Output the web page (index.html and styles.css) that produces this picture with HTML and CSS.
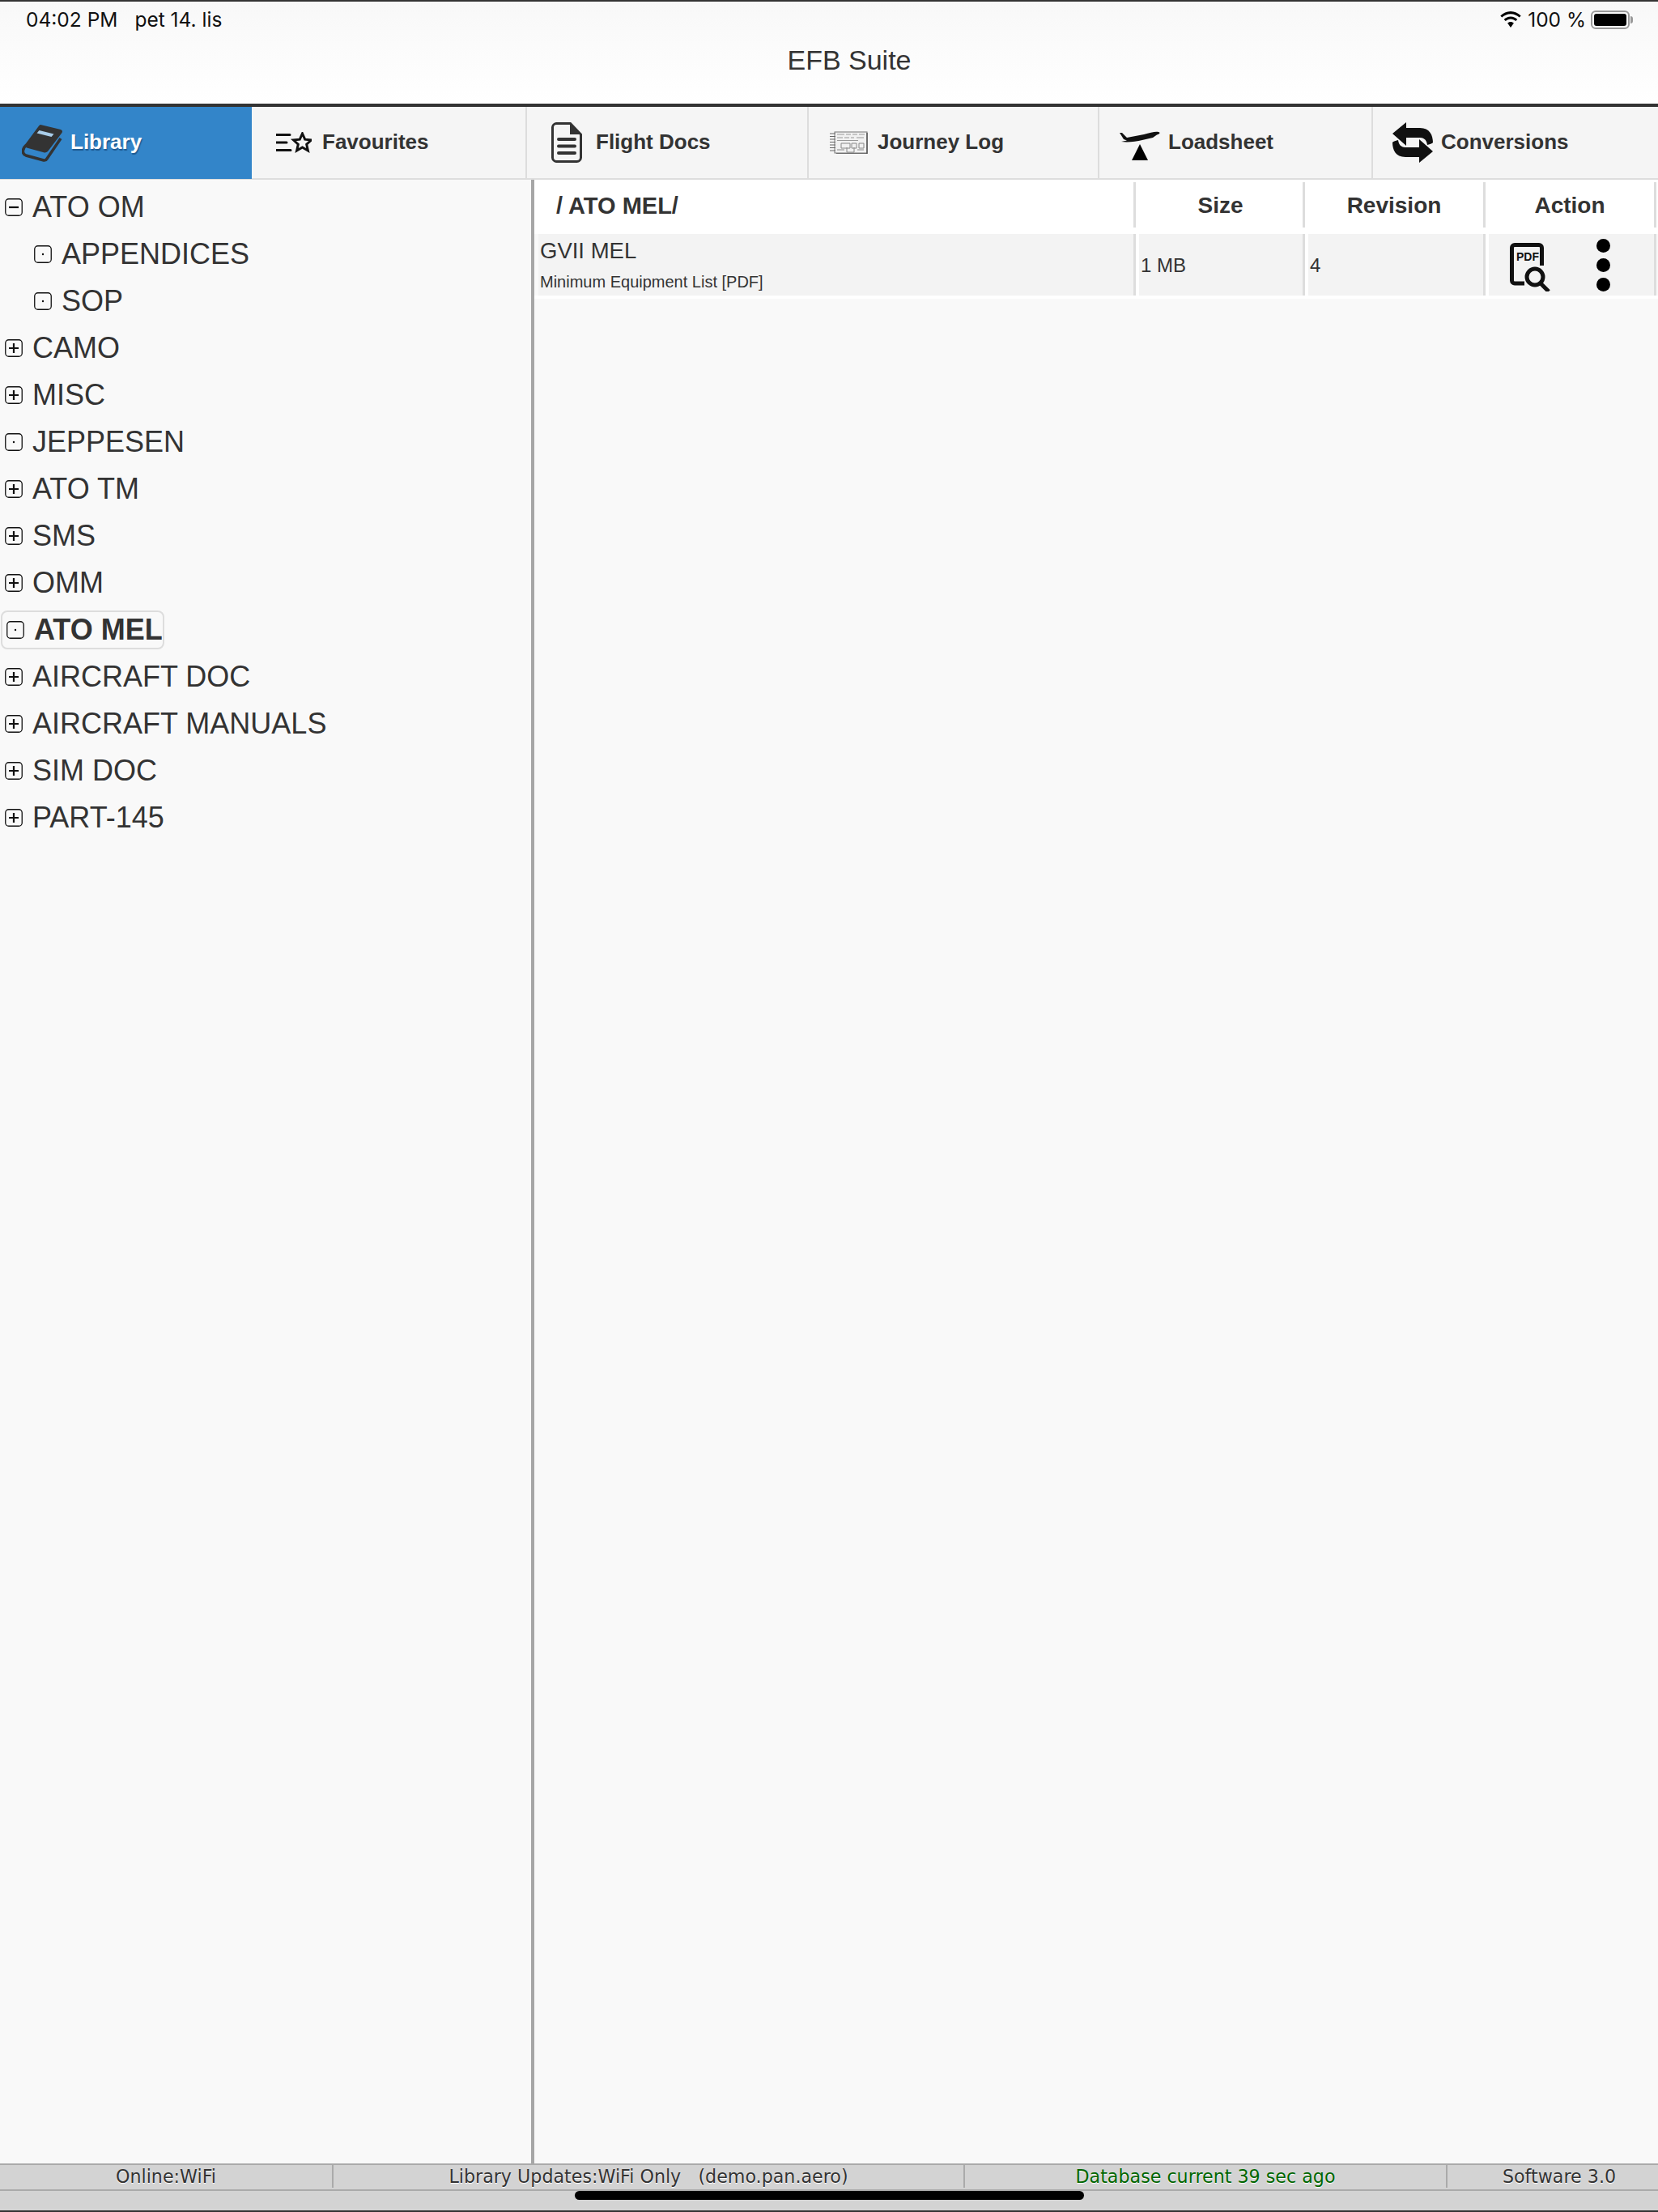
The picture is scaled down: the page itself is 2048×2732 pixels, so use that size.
FILE: index.html
```html
<!DOCTYPE html>
<html lang="en">

<head>
    <meta charset="UTF-8">
    <meta name="viewport" content="width=device-width, initial-scale=1.0">
    <title>EFB Suite</title>
    <link rel="stylesheet" href="styles.css">
</head>
<body>
<div class="app">

    <!-- status bar and title -->
    <header class="header">
        <div class="status">
            <div class="status-left">
                <span>04:02 PM</span>
                <span>pet 14. lis</span>
            </div>
            <div class="status-right">
                <svg class="wifi" viewBox="0 0 28 20"><path d="M14 3.200c4.200 0 7.900 1.700 10.700 4.400l2-2.100C23.300 2.100 18.900 0 14 0S4.700 2.100 1.300 5.500l2 2.100C6.100 4.900 9.800 3.200 14 3.200z"/><path d="M14 9.600c2.400 0 4.500.9 6.200 2.500l2.100-2.200C20.100 7.800 17.200 6.500 14 6.500s-6.100 1.300-8.300 3.400l2.100 2.200c1.700-1.600 3.800-2.500 6.200-2.500z"/><path d="M14 13c-1.500 0-2.800.6-3.900 1.600L14 20l3.900-5.400C16.800 13.600 15.500 13 14 13z"/></svg>
                <span>100 %</span>
                <div class="battery"><div class="battery-fill"></div></div>
                <div class="battery-nub"></div>
            </div>
        </div>
        <h1 class="title">EFB Suite</h1>
    </header>

    <!-- main tabs -->
    <nav class="tabs">
        <div class="tab tab-active tab-library">
            <svg class="icon-book" viewBox="0 0 50 46"><path fill="#333" d="M23 0L48 6Q51 7 49.500 10L32 33Q30 35 27 34.300L6 28.500Q3 27.500 4 24.500L21 1.500Q22 0 23 0z"/><path fill="none" stroke="#333" stroke-width="3.500" d="M5.500 25C0 30 0 36 5 38L27 44Q29.500 44.500 31 42L48 17"/><path d="M21.500 7L39.500 11.500L36.500 15L18.500 10.500z" fill="#a9cde9"/></svg>
            <span>Library</span>
        </div>
        <div class="tab tab-favourites">
            <svg class="icon-fav" viewBox="0 0 44 26"><path d="M0 3.500h17M0 13h13M0 22.500h18" stroke="#111" stroke-width="3" stroke-linecap="round"/><path d="M32.500 2l3.200 7.200 7.800.8-5.800 5.200 1.700 7.800-6.900-4-6.900 4 1.700-7.800-5.800-5.200 7.800-.8z" fill="none" stroke="#111" stroke-width="3"/></svg>
            <span>Favourites</span>
        </div>
        <div class="tab tab-docs">
            <svg class="icon-doc" viewBox="0 0 38 50"><path d="M6 1.500h17.500L36.500 15v28.500a5 5 0 0 1-5 5H6a5 5 0 0 1-4.500-5V6.500A5 5 0 0 1 6 1.500z" fill="none" stroke="#333" stroke-width="3"/><path d="M23 1.500L36.500 15H23z" fill="#333"/><path d="M9 21h20M9 29.500h20M9 38h20" stroke="#333" stroke-width="4" stroke-linecap="round"/></svg>
            <span>Flight Docs</span>
        </div>
        <div class="tab tab-journey">
            <svg class="icon-log" viewBox="0 0 47 28"><rect x="6" y="1" width="40" height="26" fill="#f1f1f1" stroke="#777" stroke-width="1"/><path d="M46 2v26H8" fill="none" stroke="#555" stroke-width="1.500"/><path d="M0 3h7M0 6.500h7M0 10h7M0 13.500h7M0 17h7M0 20.500h7M0 24h7" stroke="#666" stroke-width="1.200"/><path d="M9 4h9M20 4h6M28 4h6M36 4h7M9 8h7M18 8h6M26 8h4M33 8h9M9 11.500h26" stroke="#999" stroke-width="1.200"/><path d="M14 15h11v6H14zM27 15h6v6h-6zM36 15h6v6h-6zM9 23h9M21 20v6h9v-6M34 23h8" fill="none" stroke="#888" stroke-width="1"/></svg>
            <span>Journey Log</span>
        </div>
        <div class="tab tab-load">
            <svg class="icon-load" viewBox="0 0 50 36"><path d="M0 2L3 2L9 8L30 4C38 2 44 0 48 1C51 2 49 3.500 46 4.500L41 8L28 11C20 13 10 14 2 13L9 11.500L5 10z" fill="#111"/><path d="M25 16L15 36H35z" fill="#000"/></svg>
            <span>Loadsheet</span>
        </div>
        <div class="tab tab-conv">
            <svg class="icon-conv" viewBox="0 0 50 50"><path d="M17 0L0 14l17 15V19h15c6 0 10 1.500 11 9 4-1 6.500-2 7-3 0-9-4-18-16-18H17z" fill="#111"/><path d="M33 50l17-14-17-15v10H18c-6 0-10-1.500-11-9-4 1-6.500 2-7 3 0 9 4 18 16 18h17z" fill="#111"/></svg>
            <span>Conversions</span>
        </div>
    </nav>

    <div class="main">
        <!-- folder tree -->
        <aside class="tree">
            <div class="node"><svg class="box"><use href="#box-minus"/></svg>ATO OM</div>
            <div class="node node-child"><svg class="box"><use href="#box-dot"/></svg>APPENDICES</div>
            <div class="node node-child"><svg class="box"><use href="#box-dot"/></svg>SOP</div>
            <div class="node"><svg class="box"><use href="#box-plus"/></svg>CAMO</div>
            <div class="node"><svg class="box"><use href="#box-plus"/></svg>MISC</div>
            <div class="node"><svg class="box"><use href="#box-dot"/></svg>JEPPESEN</div>
            <div class="node"><svg class="box"><use href="#box-plus"/></svg>ATO TM</div>
            <div class="node"><svg class="box"><use href="#box-plus"/></svg>SMS</div>
            <div class="node"><svg class="box"><use href="#box-plus"/></svg>OMM</div>
            <div class="node node-selected"><span class="selected-box"><svg class="box"><use href="#box-dot"/></svg>ATO MEL</span></div>
            <div class="node"><svg class="box"><use href="#box-plus"/></svg>AIRCRAFT DOC</div>
            <div class="node"><svg class="box"><use href="#box-plus"/></svg>AIRCRAFT MANUALS</div>
            <div class="node"><svg class="box"><use href="#box-plus"/></svg>SIM DOC</div>
            <div class="node"><svg class="box"><use href="#box-plus"/></svg>PART-145</div>
        </aside>

        <!-- file list -->
        <section class="files">
            <div class="file-head">
                <div class="col col-name head-path">/ ATO MEL/</div>
                <div class="col col-size head-cell">Size</div>
                <div class="col col-rev head-cell">Revision</div>
                <div class="col col-action head-cell">Action</div>
            </div>
            <div class="file-row">
                <div class="col col-name">
                    <div class="file-name">GVII MEL</div>
                    <div class="file-desc">Minimum Equipment List [PDF]</div>
                </div>
                <div class="col col-size row-cell">1 MB</div>
                <div class="col col-rev row-cell">4</div>
                <div class="col col-action row-action">
                    <svg class="icon-pdf" viewBox="0 0 50 60">
                        <path d="M18 50H6a3.500 3.500 0 0 1-3.500-3.500V6A3.500 3.500 0 0 1 6 2.500h30A3.500 3.500 0 0 1 39.500 6v22" fill="none" stroke="#111" stroke-width="5"/>
                        <circle cx="31" cy="42" r="10" fill="none" stroke="#111" stroke-width="5"/>
                        <path d="M38 50l10 10" stroke="#111" stroke-width="5"/>
                        <text x="8" y="22" class="pdf-label">PDF</text>
                    </svg>
                    <div class="dots"><span></span><span></span><span></span></div>
                </div>
            </div>
        </section>
    </div>

    <!-- status strip -->
    <footer class="footer">
        <div class="foot-bar">
            <div class="foot-cell foot-online">Online:WiFi</div>
            <div class="foot-cell foot-lib">Library Updates:WiFi Only &nbsp; (demo.pan.aero)</div>
            <div class="foot-cell foot-db">Database current 39 sec ago</div>
            <div class="foot-cell foot-soft">Software 3.0</div>
        </div>
        <div class="home-area"><div class="home-bar"></div></div>
    </footer>
</div>

<svg class="defs" width="0" height="0">
    <symbol id="box-plus" viewBox="0 0 22 22"><rect x=".75" y=".75" width="20.500" height="20.500" rx="4" fill="none" stroke="#111" stroke-width="1.300"/><path d="M5 11h12M11 5v12" stroke="#111" stroke-width="2.200"/></symbol>
    <symbol id="box-minus" viewBox="0 0 22 22"><rect x=".75" y=".75" width="20.500" height="20.500" rx="4" fill="none" stroke="#111" stroke-width="1.300"/><path d="M5 11h12" stroke="#111" stroke-width="2.200"/></symbol>
    <symbol id="box-dot" viewBox="0 0 22 22"><rect x=".75" y=".75" width="20.500" height="20.500" rx="4" fill="none" stroke="#111" stroke-width="1.300"/><circle cx="11" cy="11" r="1.200" fill="#111"/></symbol>
</svg>
</body>
</html>
```

FILE: styles.css
```css
* {
    box-sizing: border-box;
}

html, body {
    margin: 0;
    padding: 0;
    height: 100%;
}

body {
    font-family: 'Liberation Sans', Arial, sans-serif;
    color: #333;
    background-color: #f9f9f9;
}

.app {
    display: flex;
    flex-direction: column;
    width: 2048px;
    height: 2732px;
    overflow: hidden;
}

.defs {
    position: absolute;
}

/* header */
.header {
    height: 132px;
    flex: none;
    border-top: 2px solid #333;
    border-bottom: 4px solid #333;
    background: linear-gradient(#f8f8f8, #fff);
}

.status {
    display: flex;
    justify-content: space-between;
    height: 34px;
    padding: 7px 31px 0 32px;
    font-family: Inter, 'Liberation Sans', sans-serif;
    font-size: 24.5px;
    color: #111;
}

.status-left {
    display: flex;
    gap: 21px;
    line-height: 30px;
}

.status-right {
    display: flex;
    align-items: center;
    height: 30px;
}

.wifi {
    width: 28px;
    height: 20px;
    margin-right: 7px;
}

.battery {
    width: 48px;
    height: 23px;
    margin-left: 6px;
    padding: 2px;
    border: 2px solid #999;
    border-radius: 6px;
}

.battery-fill {
    height: 100%;
    background: #000;
    border-radius: 3px;
}

.battery-nub {
    width: 3px;
    height: 9px;
    margin-left: 1px;
    background: #999;
    border-radius: 0 3px 3px 0;
}

.title {
    margin: 16px 0 0;
    padding-left: 50px;
    text-align: center;
    font-size: 34px;
    font-weight: normal;
    line-height: 44px;
    color: #333;
}

/* tabs */
.tabs {
    display: flex;
    height: 90px;
    flex: none;
    background: #f5f5f5;
    border-bottom: 2px solid #ddd;
    font-size: 26px;
    font-weight: bold;
    color: #333;
}

.tab {
    display: flex;
    align-items: center;
    height: 88px;
    border-right: 2px solid #ddd;
    white-space: nowrap;
}

.tab span {
    margin-bottom: 2px;
}

.tab-active {
    height: 89px;
    background: #3385c9;
    border-right: none;
    color: #fff;
    text-shadow: 1px 2px 1px #1d5a91;
}

.tab-library { width: 311px; padding-left: 27px; gap: 10px; }
.tab-favourites { width: 340px; padding-left: 30px; gap: 13px; }
.tab-docs { width: 348px; padding-left: 30px; gap: 17px; }
.tab-journey { width: 359px; padding-left: 26px; gap: 12px; }
.tab-load { width: 338px; padding-left: 25px; gap: 10px; }
.tab-conv { width: 352px; padding-left: 24px; gap: 10px; border-right: none; }

.icon-book { width: 50px; height: 46px; }
.icon-fav { width: 44px; height: 26px; }
.icon-doc { width: 38px; height: 50px; }
.icon-log { width: 47px; height: 28px; }
.icon-load { width: 50px; height: 36px; margin-top: 8px; }
.icon-conv { width: 50px; height: 50px; }

/* main area */
.main {
    display: flex;
    flex: 1;
    min-height: 0;
}

.tree {
    width: 656px;
    flex: none;
    padding-top: 5px;
    background: #f9f9f9;
}

.node {
    display: flex;
    align-items: center;
    height: 58px;
    padding-left: 6px;
    font-size: 36px;
    color: #333;
    white-space: nowrap;
}

.node-child {
    padding-left: 42px;
}

.box {
    width: 22px;
    height: 22px;
    margin: 0 12px 0 0;
    flex: none;
}

.node-selected {
    padding-left: 1px;
    font-weight: bold;
}

.selected-box {
    display: flex;
    align-items: center;
    height: 48px;
    padding: 0 0 0 5px;
    border: 2px solid #ddd;
    border-radius: 8px;
}

.files {
    flex: 1;
    background: #f9f9f9;
    border-left: 4px solid #a6a6a6;
}

.file-head {
    display: flex;
    height: 67px;
    background: #fff;
    padding-left: 5px;
    font-size: 28px;
    font-weight: bold;
    color: #333;
}

.file-row {
    display: flex;
    height: 76px;
    padding-left: 5px;
    box-shadow: 0 4px 0 #fff;
}

.col {
    flex: none;
}

.col-name { width: 738px; }
.col-size { width: 209px; }
.col-rev { width: 223px; }
.col-action { width: 211px; }

.file-head .col {
    display: flex;
    align-items: center;
    margin-top: 3px;
    height: 56px;
    padding-top: 2px;
    border-right: 3px solid #ddd;
}

.file-head .head-path {
    padding-left: 22px;
    font-size: 29px;
}

.head-cell {
    justify-content: center;
}

.file-head .col-size {
    padding-left: 3px;
}

.file-row .col {
    background: #f3f3f3;
    background-clip: padding-box;
    border-right: 3px solid #ddd;
}

.file-row .col + .col {
    border-left: 4px solid #fff;
}

.file-row .col-name {
    padding-left: 2px;
}

.file-name {
    margin-top: 4px;
    font-size: 27.5px;
    line-height: 34px;
}

.file-desc {
    margin-top: 8px;
    font-size: 20px;
    line-height: 26px;
}

.row-cell {
    padding-left: 2px;
    font-size: 24px;
    line-height: 77px;
}

.row-action {
    display: flex;
    align-items: center;
    padding-left: 26px;
}

.icon-pdf {
    width: 50px;
    height: 60px;
    margin-top: 5px;
}

.pdf-label {
    font-size: 14px;
    font-weight: bold;
    font-family: 'Liberation Sans', sans-serif;
    fill: #111;
}

.dots {
    display: flex;
    flex-direction: column;
    gap: 7px;
    margin-left: 57px;
}

.dots span {
    display: block;
    width: 17px;
    height: 17px;
    background: #000;
    border-radius: 50%;
}

/* footer */
.footer {
    height: 60px;
    flex: none;
    background: #d3d3d3;
    border-bottom: 2px solid #333;
}

.foot-bar {
    display: flex;
    height: 34px;
    border-top: 2px solid #aaa;
    border-bottom: 2px solid #aaa;
    font-family: 'DejaVu Sans', sans-serif;
    font-size: 22.2px;
    color: #333;
    text-shadow: 0 1px 1px #fff;
}

.foot-cell {
    display: flex;
    align-items: center;
    justify-content: center;
    height: 28px;
    border-right: 2px solid #aaa;
    white-space: nowrap;
}

.foot-online { width: 412px; }
.foot-lib { width: 780px; }
.foot-db { width: 596px; color: #060; }
.foot-soft { width: 260px; padding-left: 16px; border-right: none; }

.home-area {
    display: flex;
    justify-content: center;
    padding-left: 1px;
}

.home-bar {
    width: 629px;
    height: 11px;
    background: #000;
    border-radius: 6px;
}
```
